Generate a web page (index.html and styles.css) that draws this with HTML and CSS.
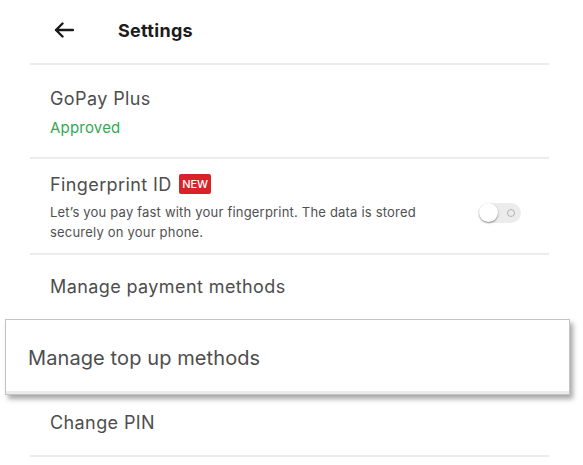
FILE: index.html
```html
<!DOCTYPE html>
<html lang="en">

<head>
    <meta charset="UTF-8">
    <meta name="viewport" content="width=device-width, initial-scale=1.0">
    <title>Settings</title>
    <link rel="stylesheet" href="styles.css">
</head>

<body>
    <div class="header">
        <svg class="back" width="20" height="16" viewBox="0 0 20 16">
            <path d="M19 8H2M8.5 1.5L2 8l6.5 6.5" fill="none" stroke="#1a1a1a" stroke-width="2.4" stroke-linecap="round" stroke-linejoin="round"/>
        </svg>
        <h1>Settings</h1>
    </div>

    <div class="list">
        <div class="row row-tall">
            <div class="row-title">GoPay Plus</div>
            <div class="row-status">Approved</div>
        </div>
        <div class="row row-finger">
            <div class="row-text">
                <div class="row-title">Fingerprint ID <span class="badge">NEW</span></div>
                <p class="row-desc">Let’s you pay fast with your fingerprint. The data is stored securely on your phone.</p>
            </div>
            <div class="toggle">
                <span class="thumb"></span>
                <span class="off-dot"></span>
            </div>
        </div>
        <div class="row">
            <div class="row-title">Manage payment methods</div>
        </div>
        <div class="row row-pop">
            <div class="row-title">Manage top up methods</div>
        </div>
        <div class="row">
            <div class="row-title">Change PIN</div>
        </div>
    </div>
</body>

</html>
```

FILE: styles.css
```css
body {
    font-family: Inter, Roboto, "Noto Sans", Arial, sans-serif;
    background-color: #fff;
    margin: 0;
    padding: 0;
    width: 583px;
    color: #4d4d4d;
}

.header {
    display: flex;
    align-items: center;
    height: 63px;
    padding-left: 54px;
}

.header .back {
    margin-top: -3px;
}

.header h1 {
    font-size: 18px;
    font-weight: 700;
    letter-spacing: 0.3px;
    color: #1c1c1c;
    margin: 0 0 2px 44px;
}

.list {
    margin: 0 34px 0 30px;
    border-top: 2px solid #ececec;
}

.row {
    display: flex;
    align-items: center;
    height: 66px;
    padding-left: 20px;
    border-bottom: 2px solid #ececec;
    box-sizing: border-box;
}

.row-tall {
    flex-direction: column;
    align-items: flex-start;
    justify-content: center;
    height: 94px;
    padding-top: 2px;
}

.row-title {
    font-size: 18px;
    line-height: 24px;
    letter-spacing: 0.4px;
}

.row-status {
    font-size: 15px;
    letter-spacing: 0.2px;
    color: #34a853;
    margin-top: 7px;
}

.row-finger {
    height: 96px;
    padding-top: 3px;
    justify-content: space-between;
}

.row-text {
    width: 385px;
}

.badge {
    display: inline-block;
    background-color: #d8232a;
    color: #fff;
    font-size: 11px;
    font-weight: 500;
    line-height: 20px;
    letter-spacing: 0;
    padding: 0 3px;
    border-radius: 2px;
    vertical-align: 3px;
    margin-left: 2px;
}

.row-desc {
    font-size: 13px;
    line-height: 20px;
    letter-spacing: 0.2px;
    margin: 5px 0 0;
    color: #505050;
}

.toggle {
    position: relative;
    width: 41px;
    height: 20px;
    background-color: #ececec;
    border-radius: 10px;
    margin: 10px 28px 0 0;
}

.thumb {
    position: absolute;
    left: -1px;
    top: 0;
    width: 19px;
    height: 19px;
    border-radius: 50%;
    background-color: #fff;
    box-shadow: 0 1px 2px rgba(0, 0, 0, 0.45);
}

.off-dot {
    position: absolute;
    right: 6px;
    top: 6px;
    width: 6px;
    height: 6px;
    border: 1px solid #b3b3b3;
    border-radius: 50%;
}

.row-pop {
    height: 76px;
    margin: -2px -21px -4px -25px;
    padding-left: 22px;
    padding-top: 2px;
    position: relative;
    background-color: #fff;
    border: 1px solid #c4c4c4;
    box-shadow: 3px 4px 5px rgba(0, 0, 0, 0.35), inset 0 -3px 0 #ececec;
}

.row-pop .row-title {
    font-size: 20px;
    letter-spacing: 0.1px;
}
```
